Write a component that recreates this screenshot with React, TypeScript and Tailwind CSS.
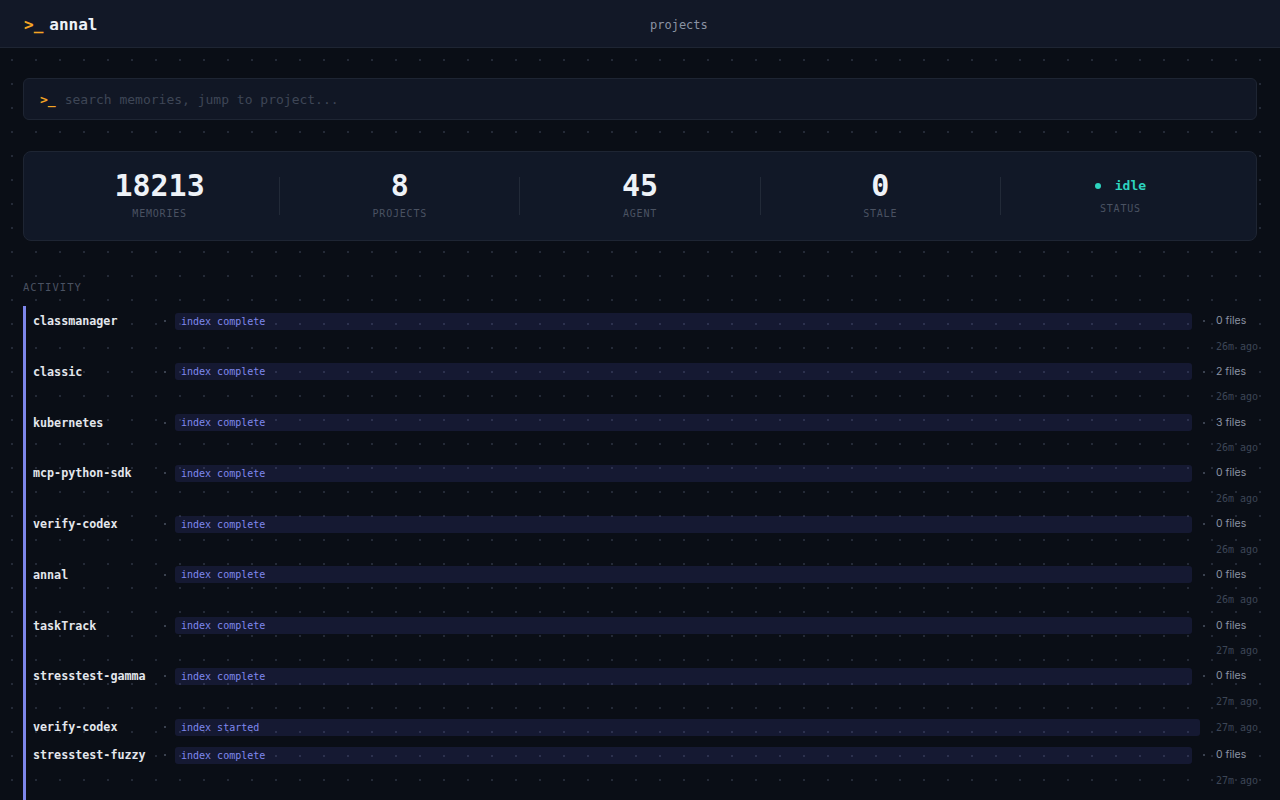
import React from "react";

const MONO = '"DejaVu Sans Mono", "Liberation Mono", monospace';
const SANS = 'Inter, "Noto Sans", sans-serif';

type Row = { name: string; event: string; files?: string; time: string };

const rows: Row[] = [
  { name: "classmanager", event: "index complete", files: "0 files", time: "26m ago" },
  { name: "classic", event: "index complete", files: "2 files", time: "26m ago" },
  { name: "kubernetes", event: "index complete", files: "3 files", time: "26m ago" },
  { name: "mcp-python-sdk", event: "index complete", files: "0 files", time: "26m ago" },
  { name: "verify-codex", event: "index complete", files: "0 files", time: "26m ago" },
  { name: "annal", event: "index complete", files: "0 files", time: "26m ago" },
  { name: "taskTrack", event: "index complete", files: "0 files", time: "27m ago" },
  { name: "stresstest-gamma", event: "index complete", files: "0 files", time: "27m ago" },
  { name: "verify-codex", event: "index started", time: "27m ago" },
  { name: "stresstest-fuzzy", event: "index complete", files: "0 files", time: "27m ago" },
];

function Stat({ value, label }: { value: string; label: string }) {
  return (
    <div className="flex-1 flex flex-col items-center">
      <div className="h-[34px] leading-[36px] text-[30px] font-semibold text-[#eef2f7]">{value}</div>
      <div className="mt-[4px] h-[14px] leading-[16px] text-[10px] tracking-[0.08em] text-[#4a5262]">{label}</div>
    </div>
  );
}

function Divider() {
  return <div className="w-px h-[38px] mt-[9px] self-start bg-[#222a38]" />;
}

function ActivityRow({ r }: { r: Row }) {
  const complete = !!r.files;
  return (
    <div className={`flex items-start pt-[4px] ${complete ? "pb-[1.75px]" : "pb-[4px]"}`}>
      <div className="flex-1 h-5 flex items-center">
        <span className="w-[131px] pt-[2px] text-[11.7px] font-semibold text-[#e3e6ec] whitespace-nowrap">{r.name}</span>
        <span className="w-[2px] h-[2px] rounded-full bg-[#4b5363]" />
        <div className="ml-[9px] flex-1 h-[17px] rounded-[3px] bg-[rgba(99,102,241,0.13)] flex items-center px-[6px]">
          <span className="text-[10px] text-[#7f88ee]">{r.event}</span>
        </div>
        {complete ? (
          <>
            <span className="ml-[11px] w-[2px] h-[2px] rounded-full bg-[#4b5363]" />
            <span className="w-[10px]" />
          </>
        ) : (
          <span className="w-[15px]" />
        )}
      </div>
      <div className="w-[42px] flex flex-col">
        {complete ? (
          <>
            <div className="h-5 flex items-center pl-px text-[10.5px] text-[#8a93a3] whitespace-nowrap" style={{ fontFamily: SANS }}>
              {r.files}
            </div>
            <div className="mt-[5px] h-5 flex items-center pl-px text-[10px] text-[#3d4656] whitespace-nowrap">{r.time}</div>
          </>
        ) : (
          <div className="h-5 flex items-center pl-px text-[10px] text-[#3d4656] whitespace-nowrap">{r.time}</div>
        )}
      </div>
    </div>
  );
}

export default function App() {
  return (
    <div className="h-screen w-full overflow-hidden bg-[#0a0e16] flex flex-col" style={{ fontFamily: MONO }}>
      <header className="h-[48px] shrink-0 bg-[#121827] border-b border-[#1e2533] flex items-center px-6 pt-[3px]">
        <div className="w-[626px] flex items-center text-[16px] font-semibold">
          <span className="text-[#f5a524]">&gt;_</span>
          <span className="ml-[6px] text-[#eef2f7]">annal</span>
        </div>
        <div className="text-[12px] text-[#8a93a3]">projects</div>
      </header>
      <main className="flex-1 px-[23px] pt-[30px] bg-[radial-gradient(circle,#242a37_1px,transparent_1.2px)] bg-[size:24px_24px]">
        <div className="h-[42px] rounded-md border border-[#1e2533] bg-[#111725] flex items-center px-4 pt-[2px] text-[13px]">
          <span className="text-[#f5a524] font-semibold">&gt;_</span>
          <span className="ml-[9px] text-[#3e4656]">search memories, jump to project...</span>
        </div>

        <div className="mt-[31px] rounded-lg border border-[#1e2533] bg-[#111827] px-4 pt-4 pb-5 flex">
          <Stat value="18213" label="MEMORIES" />
          <Divider />
          <Stat value="8" label="PROJECTS" />
          <Divider />
          <Stat value="45" label="AGENT" />
          <Divider />
          <Stat value="0" label="STALE" />
          <Divider />
          <div className="flex-1 flex flex-col items-center pt-[8px] self-start">
            <div className="h-5 flex items-center text-[13px] font-semibold text-[#2dd4bf]">
              <span className="w-[6px] h-[6px] rounded-full bg-[#2dd4bf]" />
              <span className="ml-[14px]">idle</span>
            </div>
            <div className="mt-[5px] h-[14px] leading-[16px] text-[10px] tracking-[0.08em] text-[#4a5262]">STATUS</div>
          </div>
        </div>

        <div className="mt-[40px] h-[12px] leading-[12px] text-[10.5px] tracking-[0.1em] text-[#4a5262]">ACTIVITY</div>

        <div className="mt-[13px] border-l-[3px] border-[#7d86ea] pl-[7px] pt-px pb-10">
          {rows.map((r, i) => (
            <ActivityRow key={i} r={r} />
          ))}
        </div>
      </main>
    </div>
  );
}
